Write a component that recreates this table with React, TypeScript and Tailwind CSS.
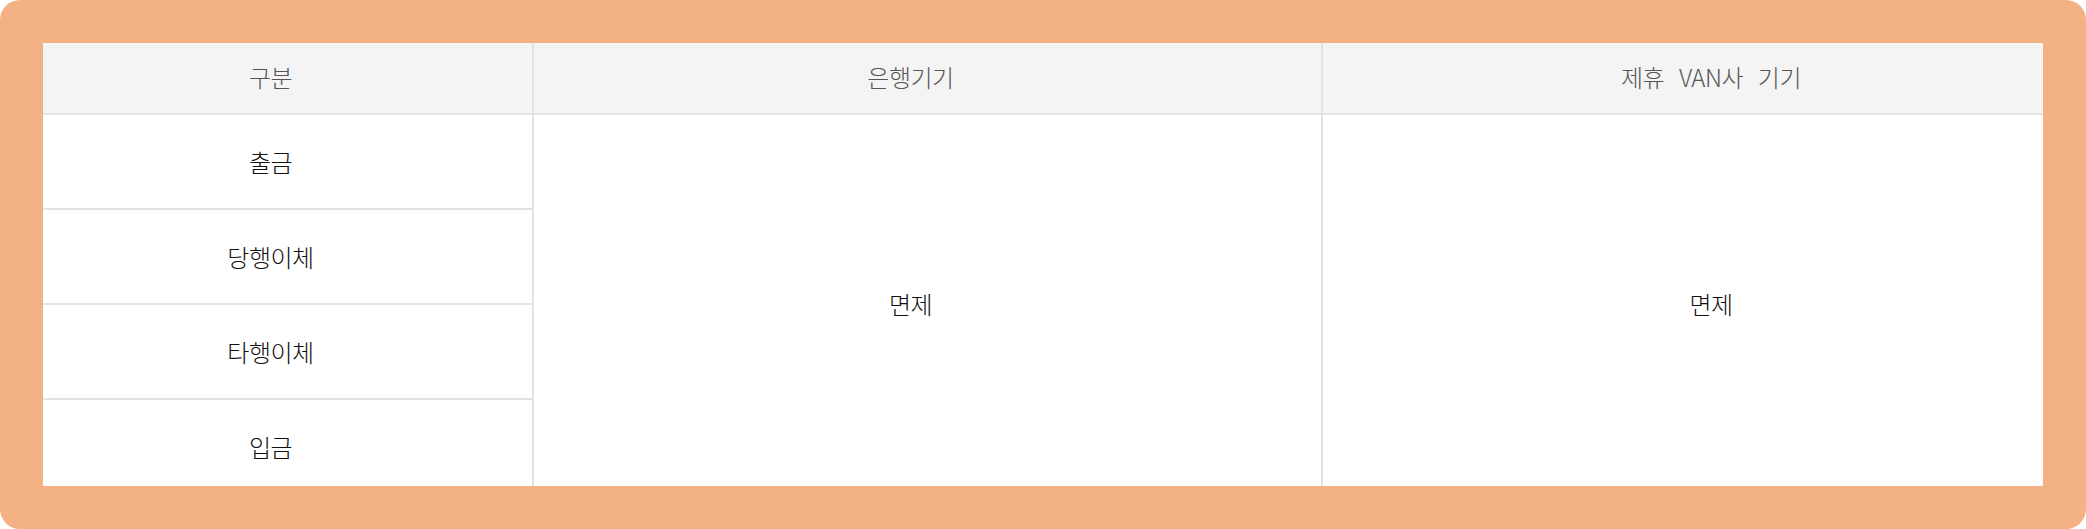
import React from "react";

const font = { fontFamily: '"Noto Sans CJK KR", "Liberation Sans", sans-serif' };

export default function App() {
  const rows = ["출금", "당행이체", "타행이체", "입금"];
  return (
    <div
      className="w-[2086px] h-[529px] bg-[#f3b184] rounded-[20px] p-[43px] box-border"
      style={font}
    >
      <div className="w-[2000px] h-[443px] overflow-hidden bg-white">
        <div className="flex flex-col">
          {/* header */}
          <div className="flex h-[72px] bg-[#f4f4f4] border-b-2 border-[#e3e3e3] text-[24px] font-light tracking-[-0.5px] text-[#555]">
            <div className="w-[491px] flex items-center justify-center pr-[34px] pb-[3px] border-r-2 border-[#e3e3e3]">
              구분
            </div>
            <div className="w-[789px] flex items-center justify-center pr-[34px] pb-[3px] border-r-2 border-[#e3e3e3]">
              은행기기
            </div>
            <div className="flex-1 flex items-center justify-center pl-[56px] pb-[3px] [word-spacing:10px]">
              제휴 VAN사 기기
            </div>
          </div>
          {/* body */}
          <div className="flex text-[24px] font-light tracking-[-0.5px] text-[#111]">
            <div className="w-[491px] flex flex-col border-r-2 border-[#e3e3e3]">
              {rows.map((r, i) => (
                <div
                  key={r}
                  className={
                    i < rows.length - 1
                      ? "h-[95px] flex items-center justify-center pr-[34px] border-b-2 border-[#e3e3e3]"
                      : "h-[93px] flex items-center justify-center pr-[34px]"
                  }
                >
                  {r}
                </div>
              ))}
            </div>
            <div className="w-[789px] flex items-center justify-center pr-[34px] border-r-2 border-[#e3e3e3]">
              면제
            </div>
            <div className="flex-1 flex items-center justify-center pl-[56px]">
              면제
            </div>
          </div>
        </div>
      </div>
    </div>
  );
}
